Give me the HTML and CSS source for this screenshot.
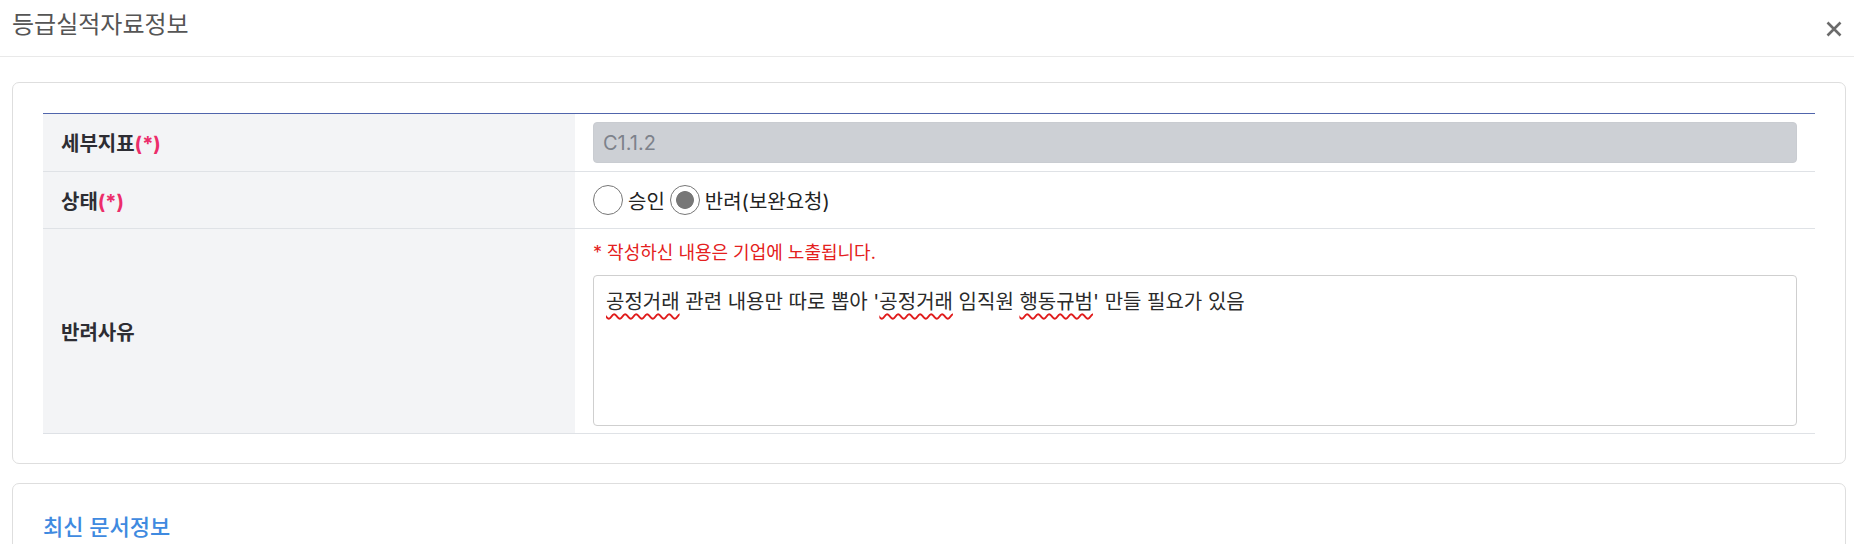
FILE: index.html
```html
<!DOCTYPE html>
<html lang="ko">
<head>
  <meta charset="UTF-8">
  <title>등급실적자료정보</title>
  <meta name="viewport" content="width=device-width, initial-scale=1.0">
  <link rel="stylesheet" href="styles.css">
</head>
<body>

  <div class="modal">
    <div class="modal-header">
      <h3 class="modal-title">등급실적자료정보</h3>
      <button class="btn-close" type="button" aria-label="닫기">
        <svg width="16" height="16" viewBox="0 0 16 16">
          <path d="M1.5 1.5 L14.5 14.5 M14.5 1.5 L1.5 14.5" stroke="#6b6b6b" stroke-width="2.6" fill="none"/>
        </svg>
      </button>
    </div>

    <div class="modal-body">
      <!-- 등급실적 입력 -->
      <div class="card">
        <table class="form-table">
          <colgroup>
            <col class="col-label">
            <col>
          </colgroup>
          <tr class="row-index">
            <th>세부지표<span class="req">(*)</span></th>
            <td><input class="form-input" type="text" value="C1.1.2" readonly></td>
          </tr>
          <tr class="row-status">
            <th>상태<span class="req">(*)</span></th>
            <td>
              <div class="radio-group">
                <label class="radio"><input type="radio" name="status" value="Y">승인</label>
                <label class="radio"><input type="radio" name="status" value="N" checked>반려(보완요청)</label>
              </div>
            </td>
          </tr>
          <tr class="row-reason">
            <th>반려사유</th>
            <td>
              <p class="notice">* 작성하신 내용은 기업에 노출됩니다.</p>
              <div class="form-textarea"><span class="typo">공정거래</span> 관련 내용만 따로 뽑아 '<span class="typo">공정거래</span> 임직원 <span class="typo">행동규범</span>' 만들 필요가 있음</div>
            </td>
          </tr>
        </table>
      </div>

      <!-- 최신 문서정보 -->
      <div class="card card-doc">
        <h4 class="card-title">최신 문서정보</h4>
      </div>
    </div>
  </div>

</body>
</html>
```

FILE: styles.css
```css
html {
  overflow: hidden;
}

body {
  margin: 0;
  background: #fff;
  font-family: Inter, "Noto Sans CJK KR", sans-serif;
  color: #333;
}

.modal-header {
  height: 57px;
  box-sizing: border-box;
  padding: 6px 12px 0 12px;
  border-bottom: 1px solid #e9e9e9;
  display: flex;
  justify-content: space-between;
  align-items: flex-start;
}

.modal-title {
  margin: 0;
  font-size: 24px;
  font-weight: 400;
  line-height: 34px;
  color: #555;
  font-family: "Noto Sans CJK KR", sans-serif;
}

.btn-close {
  border: none;
  background: none;
  padding: 0;
  margin-top: 15px;
  width: 16px;
  height: 16px;
  cursor: pointer;
}

.btn-close svg {
  display: block;
}

.modal-body {
  padding: 25px 8px 25px 12px;
}

.card {
  border: 1px solid #dedede;
  border-radius: 7px;
  padding: 30px 30px 29px 30px;
  margin-bottom: 19px;
}

.form-table {
  width: 100%;
  border-collapse: collapse;
  border-top: 1px solid #5065ac;
}

.col-label {
  width: 532px;
}

.form-table tr {
  border-bottom: 1px solid #dfe2e6;
}

.form-table th {
  background: #f3f4f6;
  text-align: left;
  font-size: 20px;
  font-weight: 700;
  color: #2d2d33;
  padding: 0 18px;
}

.req {
  color: #ec2d6a;
}

.form-table td {
  padding: 8px 18px;
}

.row-index td {
  height: 41px;
}

.row-status td {
  height: 40px;
}

.row-reason td {
  padding: 11px 18px 7px 18px;
}

.form-input {
  display: block;
  width: 100%;
  height: 41px;
  box-sizing: border-box;
  border: 1px solid #c9ccd1;
  border-radius: 4px;
  background: #cdd0d5;
  padding: 0 9px;
  font-family: Inter, sans-serif;
  font-size: 20px;
  color: #7d828b;
  outline: none;
}

.radio-group {
  display: flex;
  align-items: center;
}

.radio {
  display: flex;
  align-items: center;
  font-size: 20px;
  color: #222;
  margin-right: 5px;
}

.radio input {
  appearance: none;
  width: 30px;
  height: 30px;
  margin: 0 5px 0 0;
  border: 1.5px solid #777;
  border-radius: 50%;
  background: #fff;
  box-sizing: border-box;
}

.radio input:checked {
  background: radial-gradient(circle, #777 0 8.5px, #fff 9.3px);
}

.notice {
  margin: 0 0 9px 0;
  font-size: 18px;
  line-height: 26px;
  color: #e42020;
}

.form-textarea {
  height: 151px;
  box-sizing: border-box;
  border: 1px solid #cfcfcf;
  border-radius: 4px;
  padding: 12px 12px;
  font-size: 20px;
  line-height: 28px;
  color: #2a2a2a;
}

.typo {
  text-decoration: underline wavy #e01b1b;
  text-decoration-thickness: 1.5px;
  text-underline-offset: 4px;
}

.card-doc {
  height: 120px;
}

.card-title {
  margin: 0;
  font-size: 22px;
  font-weight: 500;
  line-height: 26px;
  color: #3f8ae0;
}
```
